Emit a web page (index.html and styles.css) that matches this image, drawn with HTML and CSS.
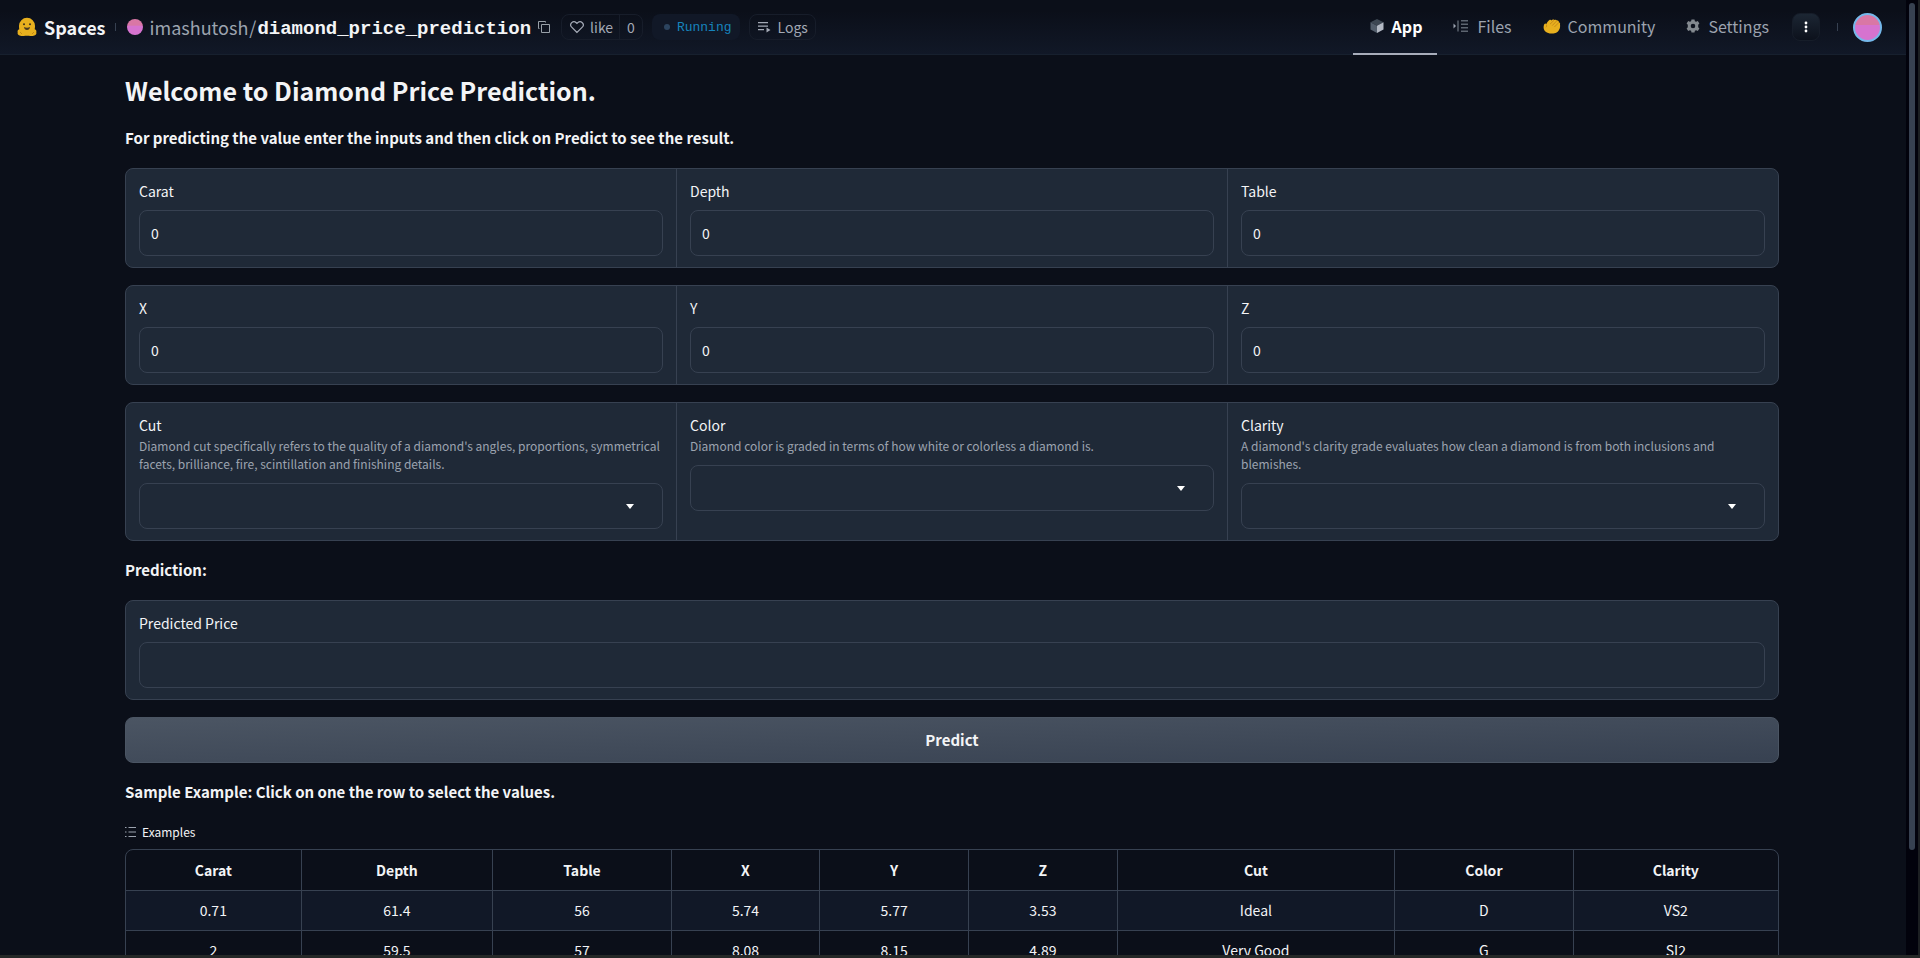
FILE: index.html
```html
<!DOCTYPE html>
<html lang="en">
<head>
<meta charset="utf-8">
<title>Diamond Price Prediction</title>
<link rel="stylesheet" href="styles.css">
</head>
<body>
<div class="window">
  <div class="page">
    <header class="topbar">
      <div class="repo">
        <a class="brand" href="#">
          <svg class="brand-logo" viewBox="0 0 20 20" width="20" height="20"><path d="M10 .8a8 8 0 0 1 8 8c0 1.700-.1 2.700-.3 3.500 1.600.3 2 1.700 1.600 3 .5 1.600-.3 2.700-1.900 3.200-1.900.6-4 .8-5.400.2H8c-1.400.6-3.500.4-5.400-.2C1 18 .2 16.900.7 15.300c-.4-1.300 0-2.700 1.600-3C2.100 11.500 2 10.500 2 8.800a8 8 0 0 1 8-8z" fill="#e8b01e"/><path d="M7 10c1.800 1 4.200 1 6 0-.2 1.900-1.300 3-3 3s-2.800-1.100-3-3z" fill="#4a3a20"/><circle cx="7" cy="7.200" r="1" fill="#3a2f1c"/><circle cx="13" cy="7.200" r="1" fill="#3a2f1c"/><path d="M3 15l2 2M17 15l-2 2" stroke="#c48a14"/></svg>
          <span>Spaces</span>
        </a>
        <span class="divider"></span>
        <div class="path">
          <span class="avatar avatar-small"></span>
          <a class="owner" href="#">imashutosh</a>
          <span class="slash">/</span>
          <a class="repo-name" href="#">diamond_price_prediction</a>
          <button class="icon-button" type="button" aria-label="Copy name">
            <svg viewBox="0 0 14 14" width="14" height="14" fill="none" stroke="#98a0a8"><path d="M4.500 4.500h8v8h-8z"/><path d="M2.500 8.500h-1v-7h7v1"/></svg>
          </button>
        </div>
        <div class="like-group">
          <button class="like" type="button"><svg viewBox="0 0 14 14" width="14" height="14" fill="none" stroke="#a3a9b5" stroke-width="1.200"><path d="M7 12.500L1.700 7.200a3.200 3.200 0 0 1 0-4.500 3.200 3.200 0 0 1 4.500 0L7 3.500l.8-.8a3.200 3.200 0 0 1 4.500 0 3.200 3.200 0 0 1 0 4.500z"/></svg>like</button>
          <a class="like-count" href="#">0</a>
        </div>
        <div class="status"><span class="dot"></span><span class="status-text">Running</span></div>
        <button class="logs" type="button"><svg viewBox="0 0 14 14" width="14" height="14"><path d="M1 2h10v1.200H1zM1 5.500h10v1.200H1zM1 9h6v1.200H1zM9.500 7.500l4 2.500-4 2.500z" fill="#a3a9b5"/></svg>Logs</button>
      </div>
      <nav class="tabs">
        <a class="tab tab-active" href="#"><svg viewBox="0 0 14 14" width="14" height="14"><path d="M7 0l6.500 3.300L7 6.800.5 3.300z" fill="#3d4753"/><path d="M.5 3.300L7 6.800V14L.5 10.600z" fill="#535e6c"/><path d="M13.500 3.300L7 6.800V14l6.500-3.400z" fill="#b3b9c4"/></svg>App</a>
        <a class="tab" href="#"><svg viewBox="0 0 16 14" width="16" height="14"><path d="M.5 4.500L3 7 .5 9.500z" fill="#9ca3af"/><path d="M4.500 1.500h1v11h-1z" fill="#7d858f"/><path d="M8 1h7v1.500H8zM8 4.500h7V6H8zM8 8h7v1.500H8zM8 11.500h7V13H8z" fill="#5d6570"/></svg>Files</a>
        <a class="tab tab-community" href="#"><svg viewBox="0 0 18 15" width="18" height="15"><path d="M1.300 5.200C2 4.300 3 4.500 3.200 5.300 4.200 3.200 5.500 1.400 6.800.8c.8-.3 1.400.1 1.500.6C9.300.4 10.600.2 11.200 1c1.200-.6 2.400-.4 2.700.5 1.300-.1 2.100.6 2 1.700 1.100.4 1.500 1.400 1.100 2.300.6 3.500-1.100 7.300-4.500 8.500-3.300.9-7.500.9-9.800-1.200C.2 10.900.3 7 1.300 5.200z" fill="#e8b01e"/><path d="M7 5.200l4-3.900M9.200 6.600l4.600-4.800M11.400 8l4.500-4.500M3.200 5.500c.6 1.300.5 2-.2 2.800" stroke="#b87a16" stroke-width=".7" fill="none"/></svg>Community</a>
        <a class="tab" href="#"><svg viewBox="0 0 14 14" width="14" height="14"><path d="M5.500.5h3l.4 1.700 1.200.6 1.700-.7 1.600 2.300-1.200 1.400v2.400l1.200 1.400-1.600 2.300-1.700-.7-1.200.6-.4 1.700h-3l-.4-1.700-1.200-.6-1.700.7L.6 9.600l1.200-1.400V5.800L.6 4.400l1.600-2.300 1.700.7 1.200-.6zM7 4.700a2.300 2.300 0 1 0 0 4.600 2.300 2.300 0 0 0 0-4.600z" fill="#83898f" fill-rule="evenodd"/></svg>Settings</a>
        <button class="menu-button" type="button" aria-label="More"><svg viewBox="0 0 4 12" width="4" height="12" fill="#fff"><circle cx="2" cy="2" r="1.400"/><circle cx="2" cy="6" r="1.400"/><circle cx="2" cy="10" r="1.400"/></svg></button>
        <span class="divider"></span>
        <button class="avatar avatar-user" type="button" aria-label="Account"></button>
      </nav>
    </header>

    <main class="app">
      <h1 class="title">Welcome to Diamond Price Prediction.</h1>
      <h3 class="heading">For predicting the value enter the inputs and then click on Predict to see the result.</h3>

      <section class="panel">
        <div class="field"><label class="label" for="carat">Carat</label><input class="box" id="carat" type="text" inputmode="decimal" value="0"></div>
        <div class="field"><label class="label" for="depth">Depth</label><input class="box" id="depth" type="text" inputmode="decimal" value="0"></div>
        <div class="field"><label class="label" for="table">Table</label><input class="box" id="table" type="text" inputmode="decimal" value="0"></div>
      </section>
      <section class="panel">
        <div class="field"><label class="label" for="x">X</label><input class="box" id="x" type="text" inputmode="decimal" value="0"></div>
        <div class="field"><label class="label" for="y">Y</label><input class="box" id="y" type="text" inputmode="decimal" value="0"></div>
        <div class="field"><label class="label" for="z">Z</label><input class="box" id="z" type="text" inputmode="decimal" value="0"></div>
      </section>
      <section class="panel">
        <div class="field">
          <label class="label label-tight" for="cut">Cut</label>
          <p class="info">Diamond cut specifically refers to the quality of a diamond's angles, proportions, symmetrical facets, brilliance, fire, scintillation and finishing details.</p>
          <div class="select-wrap"><select class="box" id="cut"><option></option></select><svg class="caret" viewBox="0 0 8 5" width="8" height="5"><path d="M0 0h8L4 5z" fill="#fff"/></svg></div>
        </div>
        <div class="field">
          <label class="label label-tight" for="color">Color</label>
          <p class="info">Diamond color is graded in terms of how white or colorless a diamond is.</p>
          <div class="select-wrap"><select class="box" id="color"><option></option></select><svg class="caret" viewBox="0 0 8 5" width="8" height="5"><path d="M0 0h8L4 5z" fill="#fff"/></svg></div>
        </div>
        <div class="field">
          <label class="label label-tight" for="clarity">Clarity</label>
          <p class="info">A diamond's clarity grade evaluates how clean a diamond is from both inclusions and blemishes.</p>
          <div class="select-wrap"><select class="box" id="clarity"><option></option></select><svg class="caret" viewBox="0 0 8 5" width="8" height="5"><path d="M0 0h8L4 5z" fill="#fff"/></svg></div>
        </div>
      </section>

      <h3 class="heading">Prediction:</h3>
      <section class="panel">
        <div class="field"><label class="label" for="price">Predicted Price</label><input class="box" id="price" type="text" readonly></div>
      </section>
      <button class="predict" type="button">Predict</button>

      <h3 class="heading">Sample Example: Click on one the row to select the values.</h3>
      <div class="examples">
        <div class="examples-label"><svg viewBox="0 0 12 12" width="12" height="12" fill="#9ca3af"><path d="M0 1h1.500v1H0zM3.500 1H11v1H3.500zM0 5.500h1.500v1H0zM3.500 5.500H11v1H3.500zM0 10h1.500v1H0zM3.500 10H11v1H3.500z"/></svg>Examples</div>
        <div class="table-frame">
          <table class="samples">
            <colgroup><col class="w-carat"><col class="w-depth"><col class="w-table"><col class="w-axis"><col class="w-axis"><col class="w-axis"><col class="w-cut"><col class="w-color"><col></colgroup>
            <thead><tr><th>Carat</th><th>Depth</th><th>Table</th><th>X</th><th>Y</th><th>Z</th><th>Cut</th><th>Color</th><th>Clarity</th></tr></thead>
            <tbody>
              <tr><td>0.71</td><td>61.4</td><td>56</td><td>5.74</td><td>5.77</td><td>3.53</td><td>Ideal</td><td>D</td><td>VS2</td></tr>
              <tr><td>2</td><td>59.5</td><td>57</td><td>8.08</td><td>8.15</td><td>4.89</td><td>Very Good</td><td>G</td><td>SI2</td></tr>
            </tbody>
          </table>
        </div>
      </div>
    </main>
  </div>
  <div class="scroll-track"><div class="scroll-thumb"></div></div>
</div>
</body>
</html>
```
FILE: styles.css
```css
* { box-sizing: border-box; }

body {
  margin: 0;
  background: #0b0f19;
  color: #f3f4f6;
  font-family: "Noto Sans CJK JP", "Noto Sans", sans-serif;
  font-size: 14px;
  line-height: 20px;
}

a { color: inherit; text-decoration: none; }
button, input, select { font: inherit; color: inherit; }
button { padding: 0; border: 0; background: none; }
svg { flex: none; }

.window {
  display: flex;
  height: 100vh;
  overflow: hidden;
  border-bottom: 3px solid #252827;
}
.page { flex: 1; min-width: 0; }
.scroll-track {
  width: 14px;
  padding: 3px 5px 0 3px;
  background: #02020c;
  border-right: 2px solid #1c1f22;
}
.scroll-thumb { width: 6px; height: 89%; border-radius: 3px; background: #374151; }

/* Top bar */
.topbar {
  display: flex;
  justify-content: space-between;
  height: 55px;
  padding: 0 24px 0 17px;
  background: linear-gradient(#0b0f19 20%, #111827);
  border-bottom: 1px solid #17202e;
}
.repo, .brand, .path, .like-group, .like, .status, .logs, .tabs, .tab, .examples-label {
  display: flex;
  align-items: center;
}
.brand { gap: 7px; font-size: 18px; font-weight: 700; }
.divider { width: 1px; height: 8px; margin: 0 11px 0 9px; background: #374151; }
.path { font-size: 18px; }
.avatar { border-radius: 50%; background: linear-gradient(#d977a5 40%, #d673cf 42%); }
.avatar-small { width: 16px; height: 16px; margin-right: 7px; }
.owner { color: #9ca3af; }
.slash { margin: 0 1px; color: #9ca3af; }
.repo-name { padding-top: 3px; font-family: "Liberation Mono", monospace; font-size: 19px; font-weight: 700; }
.icon-button { display: flex; margin-left: 6px; }
.like-group { height: 26px; margin-left: 10px; border: 1px solid #171d2a; border-radius: 8px; color: #a3a9b5; }
.like { gap: 6px; height: 100%; padding: 0 6px 0 8px; border-right: 1px solid #171d2a; }
.like-count { padding: 0 7px; }
.status {
  gap: 7px;
  height: 26px;
  margin-left: 9px;
  padding: 0 9px 0 12px;
  border-radius: 8px;
  background: #111827;
  color: #1684bd;
  font-family: "Liberation Mono", monospace;
  font-size: 13px;
}
.status-text { padding-top: 2px; }
.dot { width: 6px; height: 6px; border-radius: 50%; background: #2c445f; }
.logs { gap: 6px; height: 26px; margin-left: 9px; padding: 0 7px; border: 1px solid #171d2a; border-radius: 8px; color: #a3a9b5; }

.tab { gap: 8px; height: 55px; margin-right: 1px; padding: 0 15px; border-bottom: 2px solid transparent; color: #9ca3af; font-size: 16px; }
.tab-active { padding: 0 15px 0 17px; border-color: #a8adba; color: #fff; font-weight: 700; }
.tab-community { gap: 7px; }
.menu-button {
  display: flex;
  align-items: center;
  justify-content: center;
  width: 28px;
  height: 28px;
  margin: 0 8px 0 7px;
  border: 1px solid #161d29;
  border-radius: 8px;
  background: linear-gradient(#1c2633, #0c111c);
}
.avatar-user { width: 29px; height: 29px; margin-left: 4px; border: 2px solid #75b8ea; }

/* Demo form */
.app { display: flex; flex-direction: column; gap: 17px; padding: 18px 127px 18px 125px; }
.title, .heading { margin: 0; font-weight: 700; }
.title { margin-bottom: 2px; font-size: 25px; line-height: 34px; }
.heading { margin: 2px 0 3px; font-size: 15px; line-height: 20px; }
.panel { display: flex; border: 1px solid #374151; border-radius: 8px; background: #1f2937; }
.field { flex: 1; padding: 12px 13px 11px; }
.field + .field { border-left: 1px solid #374151; }
.label { display: block; margin-bottom: 9px; }
.label-tight { margin-bottom: 2px; }
.info { margin: 0 0 10px; color: #9ca3af; font-size: 12px; line-height: 18px; }
.box {
  display: block;
  width: 100%;
  height: 46px;
  padding: 0 11px;
  appearance: none;
  border: 1px solid #374151;
  border-radius: 8px;
  background: #1f2937;
}
.select-wrap { position: relative; }
.caret { position: absolute; top: 21px; right: 29px; }
.predict {
  height: 46px;
  border: 1px solid #4b5563;
  border-radius: 8px;
  background: linear-gradient(to bottom right, #4b5563, #374151);
  font-size: 15px;
  font-weight: 700;
}

/* Examples */
.examples-label { gap: 5px; margin-bottom: 7px; font-size: 12px; }
.table-frame { overflow: hidden; border: 1px solid #374151; border-radius: 8px 8px 0 0; }
.samples { width: 100%; table-layout: fixed; border-collapse: collapse; text-align: center; }
.samples th, .samples td { height: 40px; padding: 0; border: 1px solid #374151; }
.samples tr > :first-child { border-left: 0; }
.samples tr > :last-child { border-right: 0; }
.samples th { border-top: 0; }
.samples tbody tr:nth-child(odd) { background: #111827; }
.w-carat { width: 10.6%; }
.w-depth { width: 11.6%; }
.w-table { width: 10.8%; }
.w-axis { width: 9%; }
.w-cut { width: 16.8%; }
.w-color { width: 10.8%; }
```
